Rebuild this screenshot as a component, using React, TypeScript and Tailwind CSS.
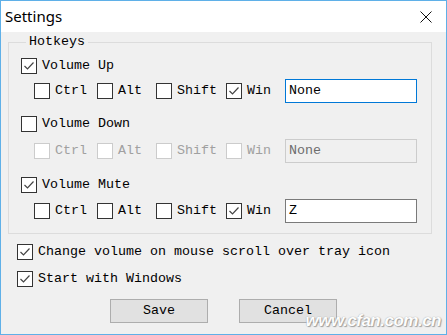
import React from "react";

const mono = { fontFamily: '"Liberation Mono", "DejaVu Sans Mono", monospace' };

function Check({ checked, disabled }: { checked?: boolean; disabled?: boolean }) {
  return (
    <span
      className={
        "w-[16px] h-[16px] shrink-0 border bg-white flex items-center justify-center " +
        (disabled ? "border-[#cccccc]" : "border-[#333333]")
      }
    >
      {checked && (
        <svg width="12" height="12" viewBox="0 0 12 12">
          <polyline points="1.5,6 4.5,9 10.5,2.5" fill="none" stroke="#444" strokeWidth="1.2" />
        </svg>
      )}
    </span>
  );
}

function Opt({
  label,
  checked,
  disabled,
  w,
}: {
  label: string;
  checked?: boolean;
  disabled?: boolean;
  w?: string;
}) {
  return (
    <div className={"flex items-center " + (w ?? "")}>
      <Check checked={checked} disabled={disabled} />
      <span className={"ml-[5px] leading-[16px] whitespace-pre " + (disabled ? "text-[#a0a0a0]" : "text-black")}>
        {label}
      </span>
    </div>
  );
}

function KeyRow({ win, value, disabled, focused }: { win?: boolean; value: string; disabled?: boolean; focused?: boolean }) {
  return (
    <div className="flex items-center h-[24px] pl-[25px]">
      <Opt label="Ctrl" disabled={disabled} w="w-[63px]" />
      <Opt label="Alt" disabled={disabled} w="w-[59px]" />
      <Opt label="Shift" disabled={disabled} w="w-[70px]" />
      <Opt label="Win" checked={win} disabled={disabled} w="w-[59px]" />
      <div
        className={
          "w-[132px] h-[24px] border flex items-center pl-[3px] " +
          (disabled
            ? "border-[#cccccc] bg-[#f0f0f0] text-[#6d6d6d]"
            : focused
            ? "border-[#0078d7] bg-white text-black"
            : "border-[#7a7a7a] bg-white text-black")
        }
      >
        {value}
      </div>
    </div>
  );
}

export default function App() {
  return (
    <div className="w-[447px] h-[335px] border border-[#5fb0e8] bg-[#f0f0f0] flex flex-col relative overflow-hidden">
      {/* title bar */}
      <div className="h-[31px] bg-white flex items-center justify-between pl-[4px] pr-[14px] shrink-0">
        <span className="text-[15px] text-black" style={{ fontFamily: '"Noto Sans", "Open Sans", sans-serif' }}>
          Settings
        </span>
        <svg width="12" height="12" viewBox="0 0 12 12">
          <path d="M0.5 0.5 L11.5 11.5 M11.5 0.5 L0.5 11.5" stroke="#111" strokeWidth="1" />
        </svg>
      </div>

      <div className="flex flex-col text-[13.33px]" style={mono}>
        <fieldset className="ml-[7px] mt-[2px] w-[424px] h-[200px] border border-[#dcdcdc] pl-[12px] pr-0">
          <legend className="ml-[5px] px-[3px] leading-[16px] text-black">Hotkeys</legend>

          <div className="mt-[8px]">
            <Opt label="Volume Up" checked />
          </div>
          <div className="mt-[5px] -ml-[12px]">
            <KeyRow win value="None" focused />
          </div>

          <div className="mt-[13px]">
            <Opt label="Volume Down" />
          </div>
          <div className="mt-[7px] -ml-[12px]">
            <KeyRow value="None" disabled />
          </div>

          <div className="mt-[14px]">
            <Opt label="Volume Mute" checked />
          </div>
          <div className="mt-[6px] -ml-[12px]">
            <KeyRow win value="Z" />
          </div>
        </fieldset>

        <div className="ml-[16px] mt-[10px]">
          <Opt label="Change volume on mouse scroll over tray icon" checked />
        </div>
        <div className="ml-[16px] mt-[11px]">
          <Opt label="Start with Windows" checked />
        </div>

        <div className="flex mt-[12px] ml-[109px] gap-[31px]">
          <button className="w-[98px] h-[24px] border border-[#adadad] bg-[#e1e1e1] text-black">Save</button>
          <button className="w-[98px] h-[24px] border border-[#adadad] bg-[#e1e1e1] text-black">Cancel</button>
        </div>
      </div>

      {/* watermark */}
      <div
        className="absolute right-[5px] bottom-[1px] text-[17px] font-bold italic text-white tracking-[-0.5px] opacity-90"
        style={{ fontFamily: '"Liberation Sans", sans-serif', textShadow: "0 0 1px #888, 1px 1px 1px #999" }}
      >
        www.cfan.com.cn
      </div>
    </div>
  );
}
